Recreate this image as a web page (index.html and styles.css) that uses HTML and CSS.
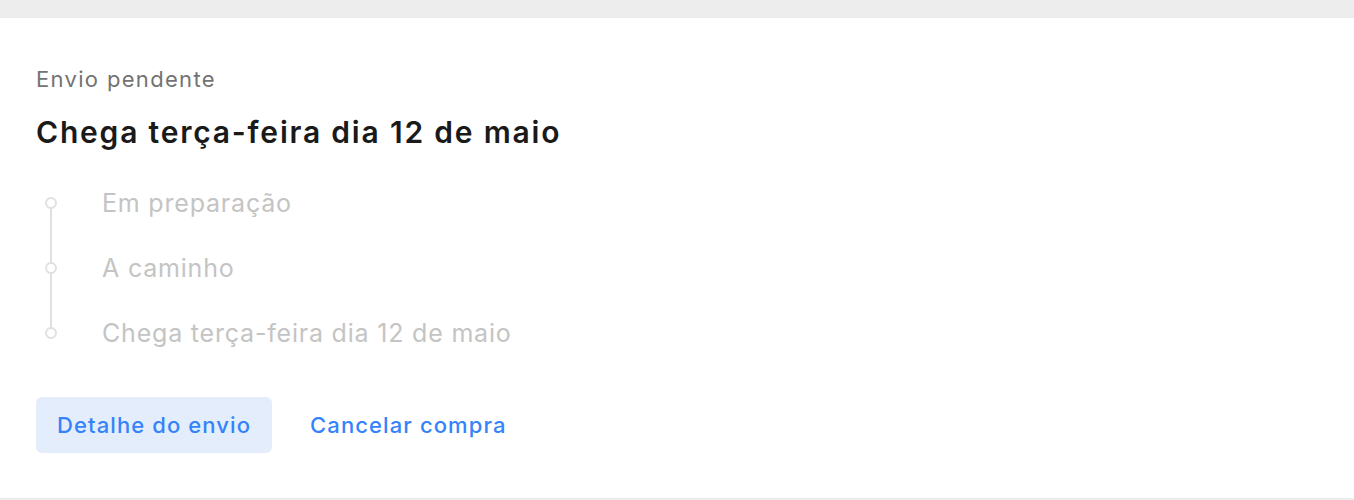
FILE: index.html
```html
<!DOCTYPE html>
<html lang="pt-BR">
    <head>
        <meta charset="UTF-8" />
        <meta name="viewport" content="width=device-width, initial-scale=1.0" />
        <title>Envio pendente</title>
        <link rel="stylesheet" href="styles.css">
    </head>
    <body>
        <div class="card">
            <p class="status">Envio pendente</p>
            <h2 class="title">Chega terça-feira dia 12 de maio</h2>

            <ul class="timeline">
                <li>Em preparação</li>
                <li>A caminho</li>
                <li>Chega terça-feira dia 12 de maio</li>
            </ul>

            <div class="actions">
                <button class="btn-primary">Detalhe do envio</button>
                <button class="btn-link">Cancelar compra</button>
            </div>
        </div>
    </body>
</html>
```

FILE: styles.css
```css
body {
    font-family: Inter, "Open Sans", sans-serif;
    background: #ededed;
    margin: 0;
    padding-top: 18px;
    letter-spacing: 0.05em;
}

.card {
    background: white;
    box-shadow: 0 1px 2px rgba(0, 0, 0, 0.12);
    padding: 49px 36px 45px;
}

.status {
    margin: 0;
    font-size: 22px;
    line-height: 24px;
    letter-spacing: 0.06em;
    color: #737373;
}

.title {
    margin: 24px 0 0;
    font-size: 30px;
    line-height: 34px;
    font-weight: 600;
    letter-spacing: 0.06em;
    color: #1a1a1a;
}

.timeline {
    list-style: none;
    margin: 21px 0 0;
    padding: 0;
    position: relative;
}

.timeline::before {
    content: "";
    position: absolute;
    left: 14px;
    top: 32px;
    bottom: 32px;
    width: 2px;
    background: #e0e0e0;
}

.timeline li {
    display: flex;
    align-items: center;
    height: 65px;
    font-size: 25px;
    color: #c4c4c4;
}

.timeline li::before {
    content: "";
    width: 8px;
    height: 8px;
    border: 2px solid #e0e0e0;
    border-radius: 50%;
    background: white;
    margin: 0 45px 0 9px;
    position: relative;
    z-index: 1;
}

.actions {
    display: flex;
    align-items: center;
    gap: 17px;
    margin-top: 32px;
}

button {
    font-family: inherit;
    font-size: 22px;
    font-weight: 500;
    letter-spacing: 0.05em;
    color: #3483fa;
    border: none;
    border-radius: 6px;
    cursor: pointer;
    height: 56px;
    padding: 0 21px;
}

.btn-primary {
    background: #e3edfb;
}

.btn-link {
    background: none;
}
```
